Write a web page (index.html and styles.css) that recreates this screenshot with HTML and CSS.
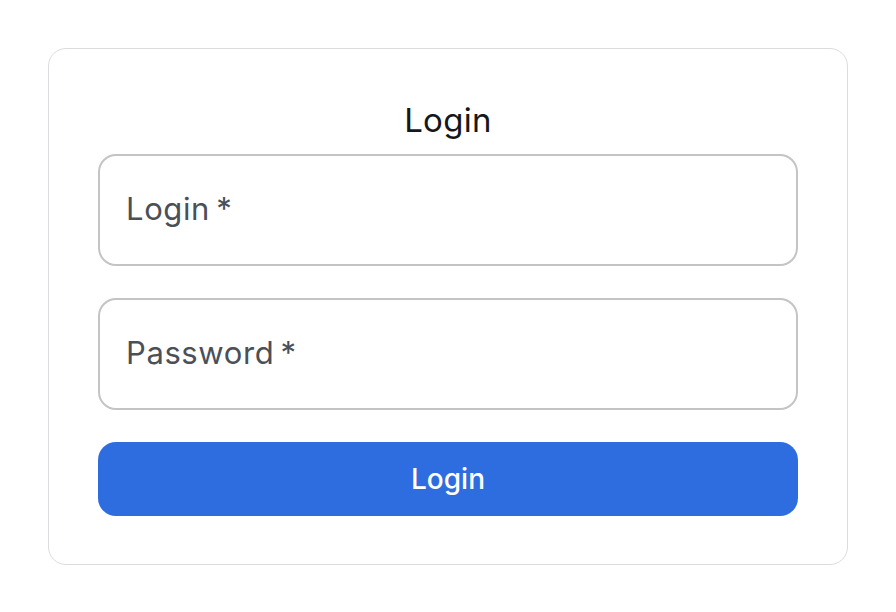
FILE: index.html
```html
<!DOCTYPE html>
<html lang="en">
<head>
    <meta charset="UTF-8">
    <meta name="viewport" content="width=device-width, initial-scale=1.0">
    <title>Login</title>
    <link rel="stylesheet" href="styles.css">
</head>
<body>
    <div class="card">
        <h1 class="title">Login</h1>
        <form class="form">
            <div class="field">
                <input type="text" placeholder="Login&thinsp;*">
            </div>
            <div class="field">
                <input type="password" placeholder="Password&thinsp;*">
            </div>
            <button type="button" class="btn">Login</button>
        </form>
    </div>
</body>
</html>
```

FILE: styles.css
```css
*{margin:0;padding:0;box-sizing:border-box;}
body{
    font-family: Inter, "Noto Sans", sans-serif;
    background: #fff;
    padding: 48px;
}
.card{
    width: 800px;
    border: 1px solid #dcdce0;
    border-radius: 18px;
    padding: 45px 49px 48px;
}
.title{
    font-size: 33px;font-weight: 400;letter-spacing: 0.3px;
    color: #15171a;text-align: center;
    line-height: 52px;
    margin-bottom: 8px;
}
.form{
    display: flex;flex-direction: column;
    gap: 32px;
}
.field input{
    width: 100%;height: 112px;
    border: 2px solid #c4c4c4;border-radius: 18px;
    padding: 0 26px 4px;
    font-family: inherit;font-size: 31px;letter-spacing: 0.6px;
    color: #1a1c1f;outline: none;
}
.field input::placeholder{
    color: #4a5058;
}
.btn{
    height: 74px;
    border: none;border-radius: 18px;
    background: #2e6de0;color: #fff;
    font-family: inherit;font-size: 28px;font-weight: 500;
}
```
